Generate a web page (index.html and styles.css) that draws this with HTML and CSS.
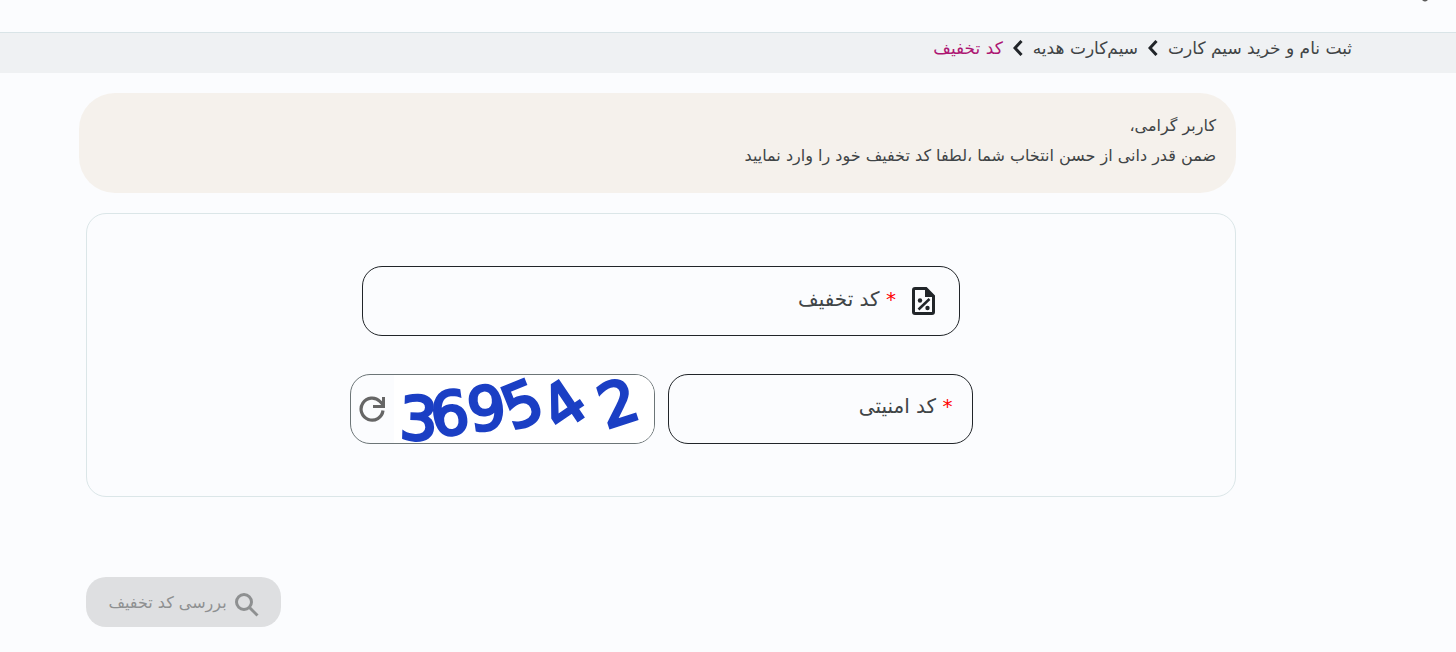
FILE: index.html
```html
<!DOCTYPE html>
<html lang="fa" dir="rtl">
<head>
    <meta charset="UTF-8">
    <meta name="viewport" content="width=device-width, initial-scale=1.0">
    <title>کد تخفیف</title>
    <link rel="stylesheet" href="styles.css">
</head>
<body>
    <header class="top-bar">
        <svg class="top-mark" width="8" height="2" viewBox="0 0 8 2" aria-hidden="true">
            <path d="M1 0h6Q5 1.500 4 1.500T1 0z" fill="#5a5a5a"/>
        </svg>
    </header>

    <nav class="breadcrumb">
        <a href="#">ثبت نام و خرید سیم کارت</a>
        <svg class="chevron" width="10" height="16" viewBox="0 0 10 16" aria-hidden="true"><path d="M8.500 1L2 8l6.500 7"/></svg>
        <a href="#">سیم‌کارت هدیه</a>
        <svg class="chevron" width="10" height="16" viewBox="0 0 10 16" aria-hidden="true"><path d="M8.500 1L2 8l6.500 7"/></svg>
        <a href="#" class="current">کد تخفیف</a>
    </nav>

    <main class="content">
        <div class="notice">
            <p>کاربر گرامی،</p>
            <p>ضمن قدر دانی از حسن انتخاب شما ،لطفا کد تخفیف خود را وارد نمایید</p>
        </div>

        <form id="discountForm" class="card">
            <div class="field field-code">
                <svg class="field-icon" width="24" height="28" viewBox="0 0 24 28" aria-hidden="true">
                    <path d="M3 1.500h11l7.500 7.500v16q0 1.500-1.500 1.500H3q-1.500 0-1.500-1.500V3q0-1.500 1.500-1.500z" fill="none" stroke="#212529" stroke-width="3"/>
                    <path d="M13 1l10 9H13z" fill="#212529"/>
                    <path d="M6.500 22.500L17.500 12" stroke="#212529" stroke-width="2.500"/>
                    <circle cx="8" cy="13.500" r="2.200" fill="#212529"/>
                    <circle cx="15.500" cy="21" r="2.200" fill="#212529"/>
                </svg>
                <label for="code"><span class="star">*</span> کد تخفیف</label>
                <input type="text" id="code">
            </div>

            <div class="field-row">
                <div class="field">
                    <label for="security"><span class="star">*</span> کد امنیتی</label>
                    <input type="text" id="security">
                </div>
                <div class="captcha">
                    <svg class="captcha-image" viewBox="0 0 261 68" direction="ltr" role="img" aria-label="captcha">
                        <text transform="translate(5 64) rotate(2)">3</text>
                        <text transform="translate(40 62) rotate(-8)">6</text>
                        <text transform="translate(77 57) rotate(-8)">9</text>
                        <text transform="translate(119 56) rotate(-22)">5</text>
                        <text transform="translate(166 58) rotate(-34)">4</text>
                        <text transform="translate(213 54) rotate(-18)">2</text>
                    </svg>
                    <button type="button" class="refresh" aria-label="بارگذاری مجدد">
                        <svg width="28" height="28" viewBox="0 0 28 28" aria-hidden="true">
                            <path d="M25 15.500A11 11 0 1 1 22 6.500l3 3" fill="none" stroke="#666" stroke-width="3.200"/>
                            <path d="M25.500 2v9.500H15" fill="none" stroke="#666" stroke-width="3"/>
                        </svg>
                    </button>
                </div>
            </div>
        </form>

        <div class="actions">
            <button type="submit" form="discountForm" class="submit-btn" disabled>
                <svg width="24" height="24" viewBox="0 0 24 24" aria-hidden="true">
                    <circle cx="9" cy="9" r="7.500"/>
                    <path d="M14.500 14.500L22.500 22.500"/>
                </svg>
                بررسی کد تخفیف
            </button>
        </div>
    </main>
</body>
</html>
```
FILE: styles.css
```css
* {
    box-sizing: border-box;
}

body {
    margin: 0;
    font-family: 'DejaVu Sans', sans-serif;
    font-size: 16px;
    background: #fbfcfe;
    color: #3f4446;
}

.top-bar {
    display: flex;
    height: 33px;
    padding: 0 27px;
    border-bottom: 1px solid #d9e4e7;
}

.breadcrumb {
    display: flex;
    align-items: center;
    gap: 10px;
    height: 40px;
    padding: 0 104px 10px;
    background: #eff1f3;
    font-size: 17px;
}

.breadcrumb a {
    color: inherit;
    text-decoration: none;
}

.breadcrumb .current {
    color: #ad1672;
}

.chevron path {
    fill: none;
    stroke: #212529;
    stroke-width: 3;
}

.content {
    padding: 20px 220px 25px 79px;
}

.notice {
    min-height: 100px;
    padding: 18px 20px;
    border-radius: 36px;
    background: #f5f1ec;
}

.notice p {
    margin: 0;
    line-height: 30px;
}

.card {
    display: flex;
    flex-direction: column;
    align-items: center;
    gap: 38px;
    margin: 20px 0 0 7px;
    padding: 52px 20px;
    border: 1px solid #dbe6e8;
    border-radius: 20px;
}

.field {
    display: flex;
    align-items: center;
    height: 70px;
    padding: 0 19px 6px;
    border: 1px solid #212529;
    border-radius: 20px;
    font-size: 20px;
}

.field-code {
    width: 100%;
    max-width: 598px;
    padding: 0 23px 4px;
}

.field-icon {
    margin: 4px 0 0 16px;
}

.field label {
    flex: none;
}

.star {
    color: #ff0000;
}

.field input {
    flex: 1;
    min-width: 0;
    padding: 0 8px;
    border: none;
    outline: none;
    background: transparent;
    font: inherit;
    color: inherit;
}

.field-row {
    display: grid;
    grid-template-columns: minmax(0, 1fr) minmax(0, 1fr);
    gap: 13px;
    width: 100%;
    max-width: 623px;
}

.captcha {
    display: flex;
    height: 70px;
    border: 1px solid #6c7577;
    border-radius: 20px;
}

.captcha-image {
    flex: 1;
    min-width: 0;
    border-radius: 0 19px 19px 0;
    background: #fff;
    overflow: visible;
}

.captcha-image text {
    font-family: 'DejaVu Sans', sans-serif;
    font-size: 60px;
    fill: #1b3fc4;
    stroke: #1b3fc4;
    stroke-width: 3;
}

.refresh {
    width: 43px;
    padding: 0;
    border: none;
    background: transparent;
    cursor: pointer;
}

.refresh svg {
    display: block;
    margin: auto;
}

.actions {
    display: flex;
    justify-content: flex-end;
    margin: 80px 0 0 7px;
}

.submit-btn {
    display: flex;
    align-items: center;
    justify-content: center;
    gap: 8px;
    width: 195px;
    height: 50px;
    border: none;
    border-radius: 20px;
    background: #dedfe1;
    color: #8e9091;
    font: inherit;
}

.submit-btn svg {
    margin-top: 6px;
    fill: none;
    stroke: #8e9091;
    stroke-width: 3;
}
```
